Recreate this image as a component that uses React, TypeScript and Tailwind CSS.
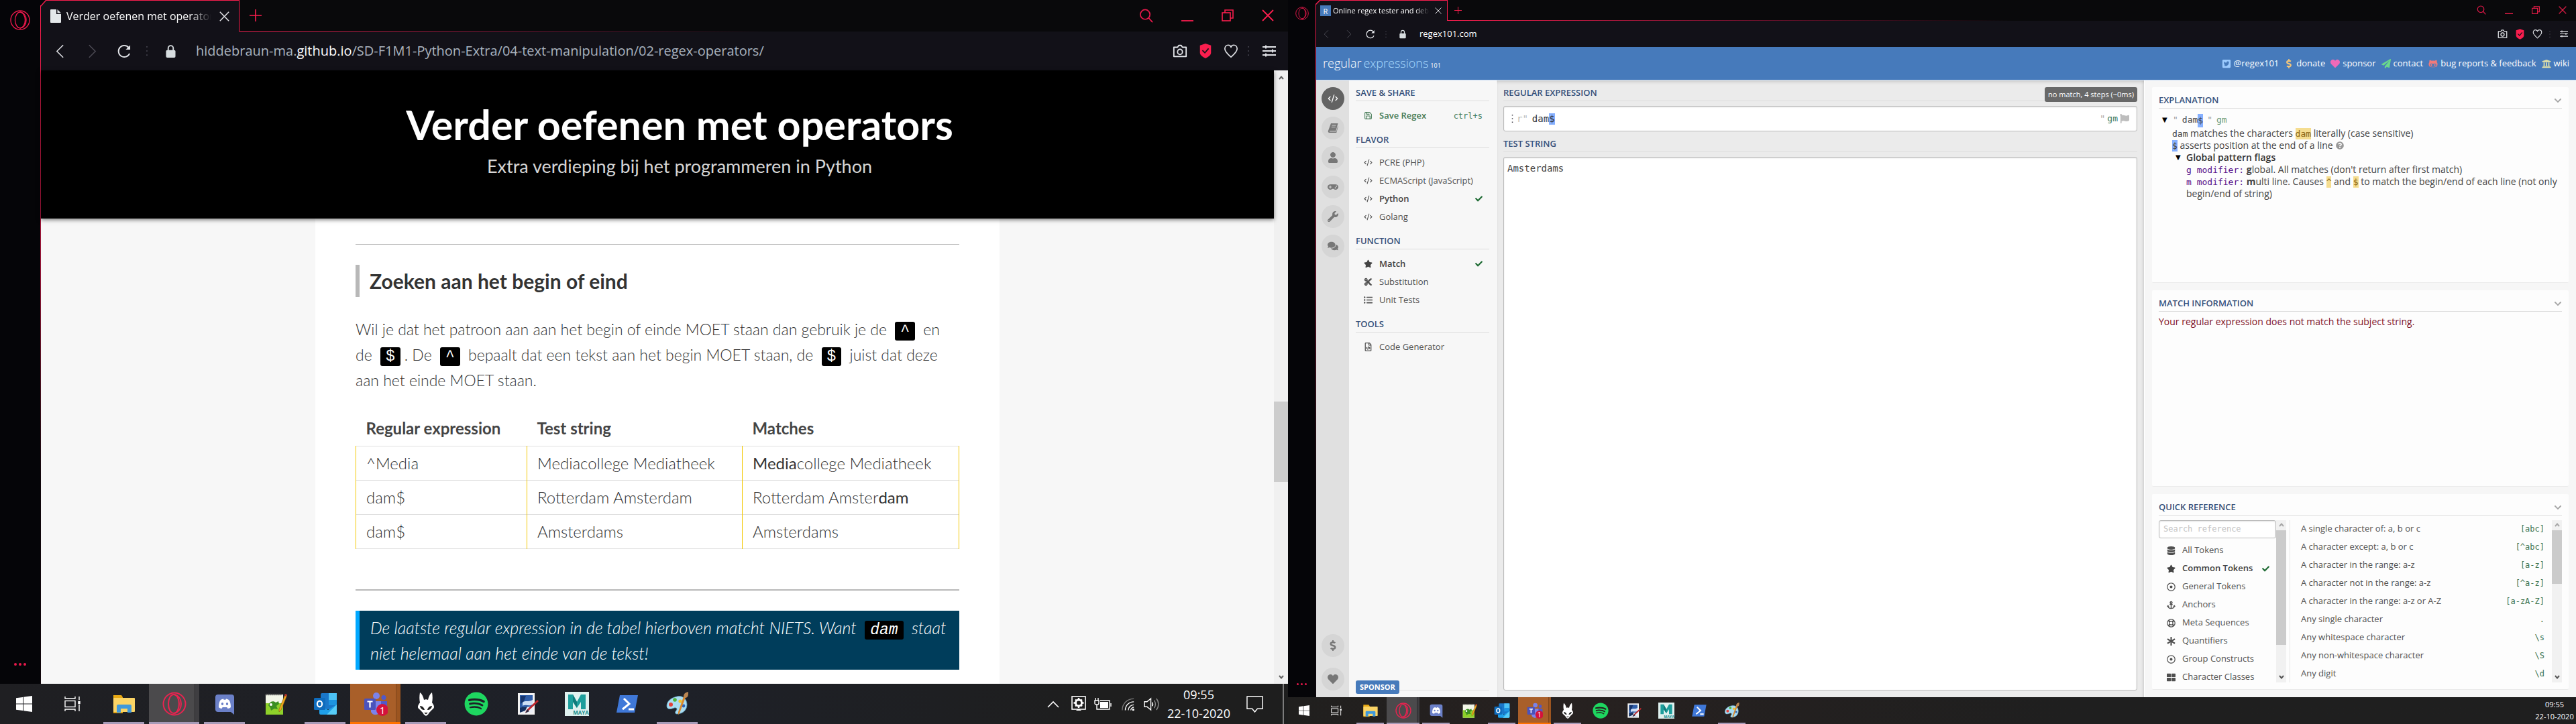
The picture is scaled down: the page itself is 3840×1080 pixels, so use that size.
import React from "react";
import { CodeXml, Save } from "lucide-react";
import {
  FaAnchor,
  FaAsterisk,
  FaCheck,
  FaChevronDown,
  FaComments,
  FaCut,
  FaDatabase,
  FaDollarSign,
  FaFlag,
  FaGamepad,
  FaGithubAlt,
  FaHeart,
  FaListUl,
  FaPaperPlane,
  FaQuestionCircle,
  FaRegDotCircle,
  FaRegFileCode,
  FaRegLifeRing,
  FaSpotify,
  FaStar,
  FaThLarge,
  FaTwitterSquare,
  FaUniversity,
  FaUser,
  FaWrench,
} from "react-icons/fa";

type IconProps = { className?: string };

/* ---------- Browser chrome icons ---------- */

const OperaRing = ({ className }: IconProps) => (
  <svg viewBox="0 0 30 30" className={className} fill="none" stroke="#e8194b" strokeWidth="1.4" aria-hidden="true">
    <circle cx="15" cy="15" r="14" />
    <ellipse cx="15" cy="15" rx="7.5" ry="12" />
    <path d="M15 3c6 1 9 6 9 12s-3 11-9 12" />
  </svg>
);

const BackIcon = ({ className }: IconProps) => (
  <svg viewBox="0 0 14 22" className={className} fill="none" stroke="currentColor" strokeWidth="1.6" aria-hidden="true">
    <path d="M12 1 2 11l10 10" />
  </svg>
);

const ForwardIcon = ({ className }: IconProps) => (
  <svg viewBox="0 0 14 22" className={className} fill="none" stroke="currentColor" strokeWidth="1.6" aria-hidden="true">
    <path d="M2 1l10 10L2 21" />
  </svg>
);

const ReloadIcon = ({ className }: IconProps) => (
  <svg viewBox="0 0 22 22" className={className} fill="none" stroke="currentColor" strokeWidth="2" aria-hidden="true">
    <path d="M19 14.5A9 9 0 1 1 17.5 5" />
    <path d="M20 1.5v7h-7z" fill="currentColor" stroke="none" />
  </svg>
);

const LockIcon = ({ className }: IconProps) => (
  <svg viewBox="0 0 16 22" className={className} aria-hidden="true">
    <path d="M4 10V6a4 4 0 0 1 8 0v4" fill="none" stroke="#d7dde0" strokeWidth="2" />
    <rect x="0.5" y="9" width="15" height="12" rx="2" fill="#d7dde0" />
  </svg>
);

const DotsIcon = ({ className }: IconProps) => (
  <svg viewBox="0 0 2 16" className={className} fill="#45444e" aria-hidden="true">
    <rect width="2" height="2" y="0" />
    <rect width="2" height="2" y="7" />
    <rect width="2" height="2" y="14" />
  </svg>
);

const CameraIcon = ({ className }: IconProps) => (
  <svg viewBox="0 0 24 24" className={className} fill="none" stroke="#e4e6ea" strokeWidth="2" aria-hidden="true">
    <path d="M2 6h6l2-3h4l2 3h6v15H2z" strokeLinejoin="round" />
    <ellipse cx="12" cy="13.5" rx="4" ry="4.2" />
  </svg>
);

const ShieldIcon = ({ className }: IconProps) => (
  <svg viewBox="0 0 20 24" className={className} aria-hidden="true">
    <path d="M10 0 19 3v12c0 4-5 7-9 9-4-2-9-5-9-9V3z" fill="#fa1e4e" />
    <path d="m5 11 4 4 6-7" fill="none" stroke="#15141a" strokeWidth="2" />
  </svg>
);

const HeartOutline = ({ className }: IconProps) => (
  <svg viewBox="0 0 24 24" className={className} fill="none" stroke="#e4e6ea" strokeWidth="1.8" aria-hidden="true">
    <path d="M12 22C7 17.500 2 13.500 2 8.500 2 5 4.500 2.500 7.500 2.500c2 0 3.600 1 4.500 3 .9-2 2.500-3 4.500-3 3 0 5.500 2.500 5.500 6 0 5-5 9-10 13.500z" />
  </svg>
);

const SlidersIcon = ({ className }: IconProps) => (
  <svg viewBox="0 0 20 18" className={className} stroke="#e4e6ea" strokeWidth="1.8" aria-hidden="true">
    <path d="M0 3h20M0 9h20M0 15h20M5 0.500v5M15 6.500v5M5 12.500v5" />
  </svg>
);

const SearchIcon = ({ className }: IconProps) => (
  <svg viewBox="0 0 22 22" className={className} fill="none" stroke="#e8194b" strokeWidth="1.8" aria-hidden="true">
    <circle cx="9.500" cy="9" r="7.500" />
    <path d="m15 14.500 6 6.500" />
  </svg>
);

const MinimizeIcon = ({ className }: IconProps) => (
  <svg viewBox="0 0 18 18" className={className} stroke="#fa1e4e" strokeWidth="1.8" aria-hidden="true">
    <path d="M0 17h18" />
  </svg>
);

const RestoreIcon = ({ className }: IconProps) => (
  <svg viewBox="0 0 18 18" className={className} fill="none" stroke="#fa1e4e" strokeWidth="1.6" aria-hidden="true">
    <rect x="1" y="5" width="12" height="12" />
    <path d="M5 5V1h12v12h-4" />
  </svg>
);

const CrossIcon = ({ className }: IconProps) => (
  <svg viewBox="0 0 18 18" className={className} fill="none" stroke="currentColor" strokeWidth="1.8" aria-hidden="true">
    <path d="m1 1 16 16M17 1 1 17" />
  </svg>
);

const PlusIcon = ({ className }: IconProps) => (
  <svg viewBox="0 0 18 18" className={className} fill="none" stroke="#fa1e4e" strokeWidth="1.6" aria-hidden="true">
    <path d="M9 0v18M0 9h18" />
  </svg>
);

const PageIcon = ({ className }: IconProps) => (
  <svg viewBox="0 0 16 20" className={className} aria-hidden="true">
    <path d="M1 0h8v7h7v12a1 1 0 0 1-1 1H1a1 1 0 0 1-1-1V1a1 1 0 0 1 1-1z" fill="#e4e8ea" />
    <path d="M10.500 0 16 5.500h-5.500z" fill="#e4e8ea" />
  </svg>
);

const ArrowGlyph = ({ up, className }: { up?: boolean; className?: string }) => (
  <svg viewBox="0 0 8 6" className={className} fill="none" stroke="currentColor" strokeWidth="2" aria-hidden="true">
    <path d={up ? "M1 5 4 1.500 7 5" : "M1 1 4 4.500 7 1"} />
  </svg>
);

/* ---------- Taskbar icons ---------- */

const WindowsLogo = ({ className }: IconProps) => (
  <svg viewBox="0 0 24 24" className={className} fill="#fff" aria-hidden="true">
    <path d="M0 3.300 10 2v9.500H0zM11 1.800 24 0v11.500H11zM0 12.500h10V22L0 20.700zM11 12.500h13V24l-13-1.800z" />
  </svg>
);

const TaskView = ({ className }: IconProps) => (
  <svg viewBox="0 0 24 24" className={className} fill="none" stroke="#fff" strokeWidth="1.4" aria-hidden="true">
    <rect x="1" y="7.500" width="15" height="9" />
    <path d="M1 1v3h15V1M1 23v-3h15v3M22 1v5M22 13v10" />
    <rect x="21" y="8.500" width="2" height="3" fill="#fff" />
  </svg>
);

const Folder = ({ className }: IconProps) => (
  <svg viewBox="0 0 36 36" className={className} aria-hidden="true">
    <path d="M2 5h12l2 3v24H2z" fill="#e8a813" />
    <rect x="2" y="9" width="32" height="21" rx="1" fill="#fbd465" />
    <path d="M7 31V21a2 2 0 0 1 2-2h18a2 2 0 0 1 2 2v10h-6v-6H13v6z" fill="#3f99dc" />
  </svg>
);

const OperaGx = ({ className }: IconProps) => (
  <svg viewBox="0 0 36 36" className={className} fill="none" stroke="#ea2350" strokeWidth="2" aria-hidden="true">
    <circle cx="18" cy="18" r="16.500" />
    <ellipse cx="17" cy="18" rx="8" ry="14" />
    <path d="M18 4c7 2 10 8 10 14s-3 12-10 14" />
  </svg>
);

const Discord = ({ className }: IconProps) => (
  <svg viewBox="0 0 36 36" className={className} aria-hidden="true">
    <path d="M8 4h20a4 4 0 0 1 4 4v26l-5-4H8a4 4 0 0 1-4-4V8a4 4 0 0 1 4-4z" fill="#6b80c8" />
    <path d="M9 23c0-5 1-9 3-11 2-1 3-1.500 4-1.500l.6 1.300h2.800l.6-1.300c1 0 2 .5 4 1.500 2 2 3 6 3 11-1 1-3 2-4.500 2l-1.200-2h-6.600l-1.200 2c-1.500 0-3.500-1-4.500-2z" fill="#fff" />
    <ellipse cx="14.500" cy="18" rx="1.700" ry="2" fill="#6b80c8" />
    <ellipse cx="21.500" cy="18" rx="1.700" ry="2" fill="#6b80c8" />
  </svg>
);

const NotepadPlus = ({ className }: IconProps) => (
  <svg viewBox="0 0 36 36" className={className} aria-hidden="true">
    <rect x="4" y="4" width="26" height="30" fill="#f3f6e8" />
    <path d="M4 17h26v17H4z" fill="#8fd12a" />
    <path d="M5 4h24" stroke="#555" strokeWidth="2.500" strokeDasharray="1.500 1.500" />
    <path d="M8 20c2-6 8-7 11-4l4-2 1 4-4 3 2 5-5-1-5 3-1-4z" fill="#3b8f22" />
    <circle cx="12" cy="19" r="2" fill="#fff" />
    <path d="m33 4 3 1-9 22-3 3v-4z" fill="#f0a51c" stroke="#7b5a14" strokeWidth="0.600" />
    <path d="m33 3 3 1-1 3-3-1z" fill="#b3302a" />
  </svg>
);

const Outlook = ({ className }: IconProps) => (
  <svg viewBox="0 0 36 36" className={className} aria-hidden="true">
    <rect x="11" y="2" width="24" height="24" rx="2" fill="#1a77c9" />
    <rect x="23" y="2" width="12" height="12" fill="#4cc2f5" />
    <rect x="23" y="12" width="12" height="8" fill="#1d94e0" />
    <path d="M9 19l13 8 13-8v13a2 2 0 0 1-2 2H11a2 2 0 0 1-2-2z" fill="#1fa0ea" />
    <path d="M35 19v13a2 2 0 0 1-2 2H20z" fill="#57cdf8" />
    <rect x="1" y="9" width="17" height="18" rx="1.500" fill="#0f6cbd" />
    <ellipse cx="9.500" cy="18" rx="3.600" ry="4.400" fill="none" stroke="#fff" strokeWidth="2.200" />
  </svg>
);

const Teams = ({ className }: IconProps) => (
  <svg viewBox="0 0 36 36" className={className} aria-hidden="true">
    <circle cx="19" cy="6" r="5" fill="#7b83eb" />
    <circle cx="30" cy="8.500" r="3.500" fill="#5059c9" />
    <path d="M24 14h11v10a6 6 0 0 1-6 6h-5z" fill="#5059c9" />
    <path d="M11 14h15v12a8 8 0 0 1-15 4z" fill="#7b83eb" />
    <rect x="1" y="10" width="17" height="17" rx="1.500" fill="#4b53bc" />
    <path d="M5.500 14.500h8M9.500 14.500v9" stroke="#fff" strokeWidth="2.200" />
    <circle cx="28" cy="27" r="9" fill="#d4123c" />
    <text x="28" y="32.500" fontSize="15" fontFamily="Open Sans, sans-serif" fill="#fff" textAnchor="middle">
      1
    </text>
  </svg>
);

const Foobar = ({ className }: IconProps) => (
  <svg viewBox="0 0 36 36" className={className} aria-hidden="true">
    <path d="M9 1c3 2 5 6 6 11 2-1 4-1 6 0 1-5 3-9 6-11 1 6 1 10 0 15 3 4 4 7 2 9-3 3-6 5-8 9l-3 2-3-2c-2-4-5-6-8-9-2-2-1-5 2-9-1-5-1-9 0-15z" fill="#fff" />
    <path d="M9 21c3 0 6 2 7 6-4 0-6-2-7-6zM27 21c-3 0-6 2-7 6 4 0 6-2 7-6z" fill="#1d1d1d" />
    <path d="M15 31h6l-3 2.500z" fill="#1d1d1d" />
  </svg>
);

const Spotify = ({ className }: IconProps) => <FaSpotify className={className} color="#1ed760" />;

const PaintNet = ({ className }: IconProps) => (
  <svg viewBox="0 0 36 36" className={className} aria-hidden="true">
    <rect x="5" y="2" width="25" height="32" fill="#f2f2f2" />
    <rect x="8" y="5" width="19" height="26" fill="#2f5da8" />
    <path d="M9 6h8l-3 8-5 4z" fill="#16356e" />
    <path d="M12 16c4-4 8 0 15-4v7c-6 3-9-1-15 2z" fill="#cfdff5" />
    <path d="M8 25c6-4 12-1 19-4v10H8z" fill="#e9eef6" />
    <path d="M8 24c4-2 8-1 11-2l-3 6-8 3z" fill="#14305f" />
    <path d="m34 12 2 2-16 15-4 2 2-4z" fill="#c1272d" />
    <path d="m19 26 3 3-6 3z" fill="#2a2a40" />
  </svg>
);

const Maya = ({ className }: IconProps) => (
  <svg viewBox="0 0 36 36" className={className} aria-hidden="true">
    <rect width="36" height="36" fill="#dff1ef" />
    <path d="M5 4h7l6 11 6-11h7v22h-7V15l-6 9-6-9v11H5z" fill="#1c9e9c" />
    <path d="M12 4l6 11v9l-6-9z" fill="#0f7c7c" />
    <text x="24" y="34" fontSize="8" fontWeight="700" fontFamily="Open Sans, sans-serif" fill="#0f8a8a" textAnchor="middle">
      MAYA
    </text>
  </svg>
);

const PowerShell = ({ className }: IconProps) => (
  <svg viewBox="0 0 36 36" className={className} aria-hidden="true">
    <path d="M7 5h27l-5 26H2z" fill="#3f78d8" />
    <path d="m13 10 8 8-10 8M20 26h8" fill="none" stroke="#fff" strokeWidth="3" />
  </svg>
);

const Paint = ({ className }: IconProps) => (
  <svg viewBox="0 0 36 36" className={className} aria-hidden="true">
    <path d="M17 7c9-2 15 4 15 12 0 9-7 14-15 14-3 0-3-3-1-5s1-5-3-4c-5 2-11 3-11-3C2 14 8 9 17 7z" fill="#a9dcf2" stroke="#5b9cbb" strokeWidth="0.800" />
    <circle cx="8" cy="19" r="3" fill="#e2403a" />
    <circle cx="14" cy="12" r="2.800" fill="#4fb53c" />
    <circle cx="22" cy="14" r="2.600" fill="#f2c230" />
    <circle cx="27" cy="21" r="2.400" fill="#2d63b8" />
    <path d="m30 8-9 24-2 2v-4l8-23z" fill="#d9862a" />
    <path d="M27 8c0-5 2-7 7-8 0 5 0 8-4 9z" fill="#b98552" />
  </svg>
);

type TaskApp = { name: string; Icon: (p: IconProps) => React.ReactElement; state?: "open" | "active" | "alert" };

const apps: TaskApp[] = [
  { name: "File Explorer", Icon: Folder, state: "open" },
  { name: "Opera GX", Icon: OperaGx, state: "active" },
  { name: "Discord", Icon: Discord, state: "open" },
  { name: "Notepad++", Icon: NotepadPlus },
  { name: "Outlook", Icon: Outlook, state: "open" },
  { name: "Teams", Icon: Teams, state: "alert" },
  { name: "foobar2000", Icon: Foobar, state: "open" },
  { name: "Spotify", Icon: Spotify },
  { name: "paint.net", Icon: PaintNet },
  { name: "Maya", Icon: Maya },
  { name: "PowerShell", Icon: PowerShell },
  { name: "Paint", Icon: Paint, state: "open" },
];

function TaskApps({ large }: { large?: boolean }) {
  return (
    <>
      <button aria-label="Start" className={`flex h-full items-center justify-center ${large ? "w-[72px]" : "w-12"}`}>
        <WindowsLogo className={large ? "size-6" : "size-4"} />
      </button>
      <button aria-label="Task view" className={`flex h-full items-center justify-center ${large ? "w-[71px]" : "w-12"}`}>
        <TaskView className={large ? "size-6" : "size-4"} />
      </button>
      <div className={large ? "w-1" : "w-[2px]"} />
      {apps.map(({ name, Icon, state }) => (
        <div key={name} className={`h-full ${large ? "w-[75px]" : "w-[49px]"}`}>
          <button
            aria-label={name}
            className={`relative flex h-full w-full items-center justify-center ${
              state === "active" ? "bg-[#4b4a4c]" : state === "alert" ? "bg-[#a95f29]" : ""
            }`}
          >
            <Icon className={large ? "size-9" : "size-6"} />
            {state === "open" && (
              <span className={`absolute bottom-0 bg-[#a79bb8] ${large ? "inset-x-[7px] h-[3px]" : "inset-x-1 h-[2px]"}`} />
            )}
            {state === "active" && (
              <>
                <span className={`absolute inset-y-0 right-0 border-l border-[#2c2b2d] bg-[#3f3e41] ${large ? "w-[7px]" : "w-1"}`} />
                <span className={`absolute inset-x-0 bottom-0 bg-[#a79bb8] ${large ? "h-[3px]" : "h-[2px]"}`} />
              </>
            )}
            {state === "alert" && (
              <>
                <span className={`absolute inset-y-0 right-0 border-l border-[#7f451b] bg-[#9c5520] ${large ? "w-[7px]" : "w-1"}`} />
                <span className={`absolute inset-x-0 bottom-0 bg-[#ff7200] ${large ? "h-[3px]" : "h-[2px]"}`} />
              </>
            )}
          </button>
        </div>
      ))}
    </>
  );
}

/* ---------- Browser frame ---------- */

type BrowserProps = {
  large?: boolean;
  tabTitle: string;
  favicon: React.ReactNode;
  url: React.ReactNode;
  urlText: string;
  canGoBack?: boolean;
  children: React.ReactNode;
};

function Browser({ large, tabTitle, favicon, url, urlText, canGoBack, children }: BrowserProps) {
  return (
    <div className="flex min-h-0 flex-1 bg-[#050508] font-['Open_Sans',sans-serif]">
      <div className={`flex shrink-0 flex-col items-center justify-between ${large ? "w-[60px] py-[15px]" : "w-[41px] py-[10px]"}`}>
        <OperaRing className={large ? "size-[30px]" : "size-5"} />
        <button aria-label="More" className={`flex ${large ? "gap-[3px] pb-3" : "gap-[3px] pb-2"}`}>
          {[0, 1, 2].map((i) => (
            <span key={i} className={`rounded-full bg-[#e8194b] ${large ? "size-1" : "size-[3px]"}`} />
          ))}
        </button>
      </div>
      <div className="mt-2 w-px shrink-0 bg-linear-to-b from-[#fa1e4e] via-[#a0153a] via-40% to-[#12060c] to-70%" />
      <div className="flex min-w-0 flex-1 flex-col">
        <div className={`flex shrink-0 ${large ? "h-[47px]" : "h-[31px]"}`}>
          <div
            className={`relative -ml-px shrink-0 bg-[#fa1e4e] px-px pt-px ${
              large
                ? "w-[297px] [clip-path:polygon(8px_0,100%_0,100%_100%,0_100%,0_9px)]"
                : "w-[197px] [clip-path:polygon(6px_0,100%_0,100%_100%,0_100%,0_6px)]"
            }`}
          >
            <div
              className={`flex h-full items-center bg-[#121118] ${
                large
                  ? "pr-[14px] pl-[14px] [clip-path:polygon(8px_0,100%_0,100%_100%,0_100%,0_9px)]"
                  : "pr-[8px] pl-[6px] [clip-path:polygon(6px_0,100%_0,100%_100%,0_100%,0_6px)]"
              }`}
            >
              {favicon}
              <span
                className={`min-w-0 flex-1 overflow-hidden whitespace-nowrap text-white [mask-image:linear-gradient(to_right,black_85%,transparent)] ${
                  large ? "ml-2 text-[16px]" : "ml-[3px] text-[11px]"
                }`}
              >
                {tabTitle}
              </span>
              <button aria-label="Close tab" className={`text-[#e8e8ec] ${large ? "ml-3" : "ml-2"}`}>
                <CrossIcon className={large ? "size-[15px]" : "size-[10px]"} />
              </button>
            </div>
          </div>
          <div className="flex min-w-0 flex-1 flex-col bg-[#09090b]">
            <div className={`flex flex-1 items-center ${large ? "pr-[21px] pl-[15px]" : "pr-[14px] pl-[10px]"}`}>
              <button aria-label="New tab">
                <PlusIcon className={large ? "size-[18px]" : "size-[11px]"} />
              </button>
              <div className="flex-1" />
              <div className={`flex items-center ${large ? "gap-[42px]" : "gap-[28px]"}`}>
                <button aria-label="Search tabs">
                  <SearchIcon className={large ? "size-[21px]" : "size-[14px]"} />
                </button>
                <button aria-label="Minimize">
                  <MinimizeIcon className={large ? "size-[18px]" : "size-3"} />
                </button>
                <button aria-label="Restore">
                  <RestoreIcon className={large ? "size-[18px]" : "size-3"} />
                </button>
                <button aria-label="Close" className="text-[#fa1e4e]">
                  <CrossIcon className={large ? "size-[18px]" : "size-3"} />
                </button>
              </div>
            </div>
            <div className="h-px bg-linear-to-r from-[#fa1e4e] via-[#7a1230] via-25% to-transparent to-50%" />
          </div>
        </div>
        <div className={`flex shrink-0 items-center bg-[#121118] ${large ? "h-[58px] pr-[18px] pl-[22px]" : "h-[39px] pr-[12px] pl-[11px]"}`}>
          <button aria-label="Back" className={canGoBack ? "text-[#e4e6ea]" : "text-[#4c4b54]"}>
            <BackIcon className={large ? "h-[21px] w-[13px]" : "h-[14px] w-[8px]"} />
          </button>
          <button aria-label="Forward" className={`text-[#4c4b54] ${large ? "ml-[35px]" : "ml-[26px]"}`}>
            <ForwardIcon className={large ? "h-[21px] w-[13px]" : "h-[14px] w-[8px]"} />
          </button>
          <button aria-label="Reload" className={`text-[#e4e6ea] ${large ? "ml-[31px]" : "ml-[21px]"}`}>
            <ReloadIcon className={large ? "size-[21px]" : "size-[14px]"} />
          </button>
          <DotsIcon className={large ? "ml-[22px] h-[14px] w-[2px]" : "ml-[15px] h-[10px] w-[2px]"} />
          <LockIcon className={large ? "ml-[27px] h-[21px] w-[15px]" : "ml-[19px] h-[14px] w-[10px]"} />
          <a
            href={urlText}
            className={`min-w-0 flex-1 truncate text-[#a9b3bf] ${large ? "ml-[30px] text-[20px]" : "ml-[20px] text-[13px]"}`}
          >
            {url}
          </a>
          <div className={`flex items-center ${large ? "gap-[17px]" : "gap-[12px]"}`}>
            <button aria-label="Snapshot">
              <CameraIcon className={large ? "size-[22px]" : "size-[15px]"} />
            </button>
            <button aria-label="Ad blocker">
              <ShieldIcon className={large ? "h-[22px] w-[20px]" : "h-[16px] w-[13px]"} />
            </button>
            <button aria-label="Add to bookmarks">
              <HeartOutline className={large ? "size-[22px]" : "size-[15px]"} />
            </button>
          </div>
          <DotsIcon className={large ? "ml-[14px] h-[14px] w-[2px]" : "ml-[10px] h-[10px] w-[2px]"} />
          <button aria-label="Easy setup" className={large ? "ml-[20px]" : "ml-[14px]"}>
            <SlidersIcon className={large ? "h-[18px] w-[20px]" : "h-[13px] w-[12px]"} />
          </button>
        </div>
        {children}
      </div>
    </div>
  );
}

/* ---------- Course page ---------- */

const Code = ({ children }: { children: React.ReactNode }) => (
  <code className="mx-[6px] inline-block h-7 rounded-[3px] bg-black px-2 align-baseline font-['Liberation_Mono',monospace] text-[23px] leading-7 font-normal text-white">
    {children}
  </code>
);

const rows: { re: string; test: string; match: React.ReactNode }[] = [
  { re: "^Media", test: "Mediacollege Mediatheek", match: <><b>Media</b>college Mediatheek</> },
  { re: "dam$", test: "Rotterdam Amsterdam", match: <>Rotterdam Amster<b>dam</b></> },
  { re: "dam$", test: "Amsterdams", match: "Amsterdams" },
];

function CoursePage() {
  return (
    <div className="flex min-h-0 flex-1 bg-[#f7f7f7] font-[Lato,sans-serif]">
      <div className="flex min-w-0 flex-1 flex-col">
        <header className="relative flex h-[221px] shrink-0 flex-col items-center bg-black pt-[45px] pl-[66px] shadow-[0_2px_6px_rgba(0,0,0,0.5)]">
          <h1 className="text-[61px] leading-[72px] font-bold text-white">Verder oefenen met operators</h1>
          <p className="mt-[8px] text-[27px] leading-[36px] text-[#d6d6d6]">Extra verdieping bij het programmeren in Python</p>
        </header>
        <main className="mx-auto min-h-0 w-[1020px] flex-1 overflow-hidden bg-white px-[60px] pt-[38px] text-[25px] leading-[38px] font-light text-[#333]">
          <hr className="border-t border-[#b8b8b8]" />
          <h2 className="mt-[30px] border-l-[6px] border-[#b8b8b8] pl-[15px] text-[30px] leading-[48px] font-bold text-[#333]">
            Zoeken aan het begin of eind
          </h2>
          <p className="mt-[29px] pr-3 text-[23px]">
            Wil je dat het patroon aan aan het begin of einde MOET staan dan gebruik je de <Code>^</Code> en de <Code>$</Code>. De{" "}
            <Code>^</Code> bepaalt dat een tekst aan het begin MOET staan, de <Code>$</Code> juist dat deze aan het einde MOET staan.
          </p>
          <table className="mt-7 w-full table-fixed border-collapse text-left text-[24px] leading-[38px]">
            <thead>
              <tr className="h-[51px]">
                <th className="w-[255px] px-[15px] font-bold text-[#444]">Regular expression</th>
                <th className="w-[321px] px-[15px] font-bold text-[#444]">Test string</th>
                <th className="px-[15px] font-bold text-[#444]">Matches</th>
              </tr>
            </thead>
            <tbody>
              {rows.map((r, i) => (
                <tr key={i} className="h-[51px] border-y border-[#e0e0e0]">
                  <td className="border-x border-x-[#f3c800] px-[15px]">{r.re}</td>
                  <td className="border-x border-x-[#f3c800] px-[15px]">{r.test}</td>
                  <td className="border-x border-x-[#f3c800] px-[15px]">{r.match}</td>
                </tr>
              ))}
            </tbody>
          </table>
          <hr className="mt-[60px] border-t-2 border-[#b8b8b8]" />
          <p className="mt-[30px] border-l-[6px] border-[#00a8ff] bg-[#003d5b] py-[6px] pr-3 pl-4 text-white italic">
            De laatste regular expression in de tabel hierboven matcht NIETS. Want <Code>dam</Code> staat niet helemaal aan het einde van
            de tekst!
          </p>
        </main>
      </div>
      <div className="flex w-[21px] shrink-0 flex-col items-center bg-[#f0f0f0] text-[#606060]">
        <button aria-label="Scroll up" className="flex h-[21px] items-center">
          <ArrowGlyph up className="h-[6px] w-[8px]" />
        </button>
        <div className="flex w-full flex-1 flex-col">
          <div className="flex-[474]" />
          <div className="flex-[120] bg-[#cdcdcd]" />
          <div className="flex-[280]" />
        </div>
        <button aria-label="Scroll down" className="flex h-[21px] items-center">
          <ArrowGlyph className="h-[6px] w-[8px]" />
        </button>
      </div>
    </div>
  );
}

/* ---------- regex101 ---------- */

const SlantedBook = ({ className }: IconProps) => (
  <svg viewBox="0 0 16 16" className={className} aria-hidden="true">
    <path d="M5 1h10.500L12.500 12H3.500c-1 0-1 1.300 0 1.300H13L15.300 5l.4 1-2.500 9H3c-2 0-2.500-1.500-2.200-2.600z" fill="currentColor" />
    <path d="M6.500 4h6M5.800 6.500h6" stroke="#d5d5d5" strokeWidth="1" />
  </svg>
);

const FloppyIcon = ({ className }: IconProps) => <Save className={className} strokeWidth={2} />;
const CodeIcon = ({ className }: IconProps) => <CodeXml className={className} strokeWidth={2} />;

type MenuItem = {
  label: string;
  Icon: React.ComponentType<{ className?: string }>;
  active?: boolean;
  shortcut?: string;
};

const menu: { title: string; items: MenuItem[] }[] = [
  { title: "SAVE & SHARE", items: [{ label: "Save Regex", Icon: FloppyIcon, shortcut: "ctrl+s" }] },
  {
    title: "FLAVOR",
    items: [
      { label: "PCRE (PHP)", Icon: CodeIcon },
      { label: "ECMAScript (JavaScript)", Icon: CodeIcon },
      { label: "Python", Icon: CodeIcon, active: true },
      { label: "Golang", Icon: CodeIcon },
    ],
  },
  {
    title: "FUNCTION",
    items: [
      { label: "Match", Icon: FaStar, active: true },
      { label: "Substitution", Icon: FaCut },
      { label: "Unit Tests", Icon: FaListUl },
    ],
  },
  { title: "TOOLS", items: [{ label: "Code Generator", Icon: FaRegFileCode }] },
];

const tokens: MenuItem[] = [
  { label: "All Tokens", Icon: FaDatabase },
  { label: "Common Tokens", Icon: FaStar, active: true },
  { label: "General Tokens", Icon: FaRegDotCircle },
  { label: "Anchors", Icon: FaAnchor },
  { label: "Meta Sequences", Icon: FaRegLifeRing },
  { label: "Quantifiers", Icon: FaAsterisk },
  { label: "Group Constructs", Icon: FaRegDotCircle },
  { label: "Character Classes", Icon: FaThLarge },
];

const reference: [string, string][] = [
  ["A single character of: a, b or c", "[abc]"],
  ["A character except: a, b or c", "[^abc]"],
  ["A character in the range: a-z", "[a-z]"],
  ["A character not in the range: a-z", "[^a-z]"],
  ["A character in the range: a-z or A-Z", "[a-zA-Z]"],
  ["Any single character", "."],
  ["Any whitespace character", "\\s"],
  ["Any non-whitespace character", "\\S"],
  ["Any digit", "\\d"],
];

const rail = [
  { label: "Regex Editor", Icon: CodeXml, active: true },
  { label: "Community Patterns", Icon: SlantedBook },
  { label: "Account", Icon: FaUser },
  { label: "Regex Quiz", Icon: FaGamepad },
  { label: "Settings", Icon: FaWrench },
  { label: "Live Help", Icon: FaComments },
];

const railBottom = [
  { label: "Donate", Icon: FaDollarSign },
  { label: "Sponsor", Icon: FaHeart },
];

const links = [
  { label: "@regex101", Icon: FaTwitterSquare, color: "text-[#9ccbff]" },
  { label: "donate", Icon: FaDollarSign, color: "text-[#f3c67a]" },
  { label: "sponsor", Icon: FaHeart, color: "text-[#f06ab8]" },
  { label: "contact", Icon: FaPaperPlane, color: "text-[#6ad98a]" },
  { label: "bug reports & feedback", Icon: FaGithubAlt, color: "text-[#f27a7a]" },
  { label: "wiki", Icon: FaUniversity, color: "text-[#dfe0a8]" },
];

const Heading = ({ children, className = "" }: { children: React.ReactNode; className?: string }) => (
  <h3 className={`h-6 border-b border-[#dcdcdc] text-[13px] leading-[23px] font-semibold whitespace-nowrap text-[#35507a] ${className}`}>
    {children}
  </h3>
);

function Menu({ item }: { item: MenuItem }) {
  const { label, Icon, active, shortcut } = item;
  return (
    <button
      className={`flex h-[27px] w-full items-center px-[10px] text-left whitespace-nowrap ${
        shortcut ? "font-semibold text-[#447a55]" : active ? "font-semibold text-[#444]" : "text-[#505050]"
      }`}
    >
      <span className="flex w-4 justify-center">
        <Icon className="size-[13px]" />
      </span>
      <span className="ml-[9px] flex-1 text-[13px]">{label}</span>
      {shortcut && <span className="font-['DejaVu_Sans_Mono',monospace] text-[12px] font-normal">{shortcut}</span>}
      {active && <FaCheck className="size-[11px] text-[#1f6b34]" />}
    </button>
  );
}

function Card({ title, children }: { title: string; children: React.ReactNode }) {
  return (
    <section className="flex min-h-0 flex-1 basis-0 flex-col rounded-[2px] border-b border-[#ebebeb] bg-[#fdfdfd] px-[10px] pt-2 pb-[10px]">
      <div className="relative">
        <Heading>{title}</Heading>
        <button aria-label={`Collapse ${title}`} className="absolute top-[6px] right-0 text-[#a5a5a5]">
          <FaChevronDown className="size-3" />
        </button>
      </div>
      {children}
    </section>
  );
}

function MiniScroll({ thumb, rest }: { thumb: string; rest: string }) {
  return (
    <div className="flex w-[15px] shrink-0 flex-col items-center bg-[#f1f1f1]">
      <button aria-label="Scroll up" className="flex h-[15px] items-center text-[#a8a8a8]">
        <ArrowGlyph up className="h-[6px] w-2" />
      </button>
      <div className={`w-full bg-[#cbcbcb] ${thumb}`} />
      <div className={rest} />
      <button aria-label="Scroll down" className="flex h-[15px] items-center text-[#555]">
        <ArrowGlyph className="h-[6px] w-2" />
      </button>
    </div>
  );
}

const mono = "font-['DejaVu_Sans_Mono',monospace]";
const monoInline = "font-['DejaVu_Sans_Mono',monospace] text-[13px] leading-none";
const fieldBox = "rounded-[3px] border border-[#b9b9b9] bg-white shadow-[inset_0_1px_2px_rgba(0,0,0,0.12)]";
const Sel = ({ children }: { children: React.ReactNode }) => <span className="bg-[#86b0ff] py-px">{children}</span>;
const Hl = ({ children }: { children: React.ReactNode }) => (
  <span className={`bg-[#f5dd90] py-px text-[#8a6410] ${monoInline}`}>{children}</span>
);

function RegexPage() {
  return (
    <div className="flex min-h-0 flex-1 flex-col text-[13px] text-[#444]">
      <header className="flex h-[50px] shrink-0 items-center border-b border-[#cfe0f5] bg-[#467abb] pr-[10px] pl-[10px]">
        <a href="#home" className="flex items-baseline text-[18px] font-light text-white">
          regular<span className="ml-[3px] text-[#a9dbff]">expressions</span>
          <span className="ml-[3px] text-[9px] font-normal">101</span>
        </a>
        <nav className="ml-auto flex items-center gap-2 text-[13px] text-white">
          {links.map(({ label, Icon, color }) => (
            <a key={label} href={`#${label}`} className="flex items-center gap-1 whitespace-nowrap">
              <Icon className={`size-[14px] ${color}`} />
              {label}
            </a>
          ))}
        </nav>
      </header>
      <div className="flex min-h-0 flex-1">
        <aside className="flex w-[49px] shrink-0 flex-col items-center gap-[10px] bg-[#e0e0e0] pt-[10px] pb-[10px]">
          {rail.map(({ label, Icon, active }) => (
            <button
              key={label}
              aria-label={label}
              className={`flex size-[34px] items-center justify-center rounded-full ${active ? "bg-[#636363] text-white" : "bg-[#d5d5d5] text-[#777]"}`}
            >
              <Icon className="size-4" />
            </button>
          ))}
          <div className="mt-auto flex flex-col gap-4">
            {railBottom.map(({ label, Icon }) => (
              <button key={label} aria-label={label} className="flex size-[34px] items-center justify-center rounded-full bg-[#d5d5d5] text-[#777]">
                <Icon className="size-4" />
              </button>
            ))}
          </div>
        </aside>
        <aside className="flex w-[220px] shrink-0 flex-col border-r border-white bg-[#f7f7f7] pt-[7px] pr-[10px] pl-[10px]">
          {menu.map((s) => (
            <section key={s.title} className="mb-[11px]">
              <Heading className="mb-2">{s.title}</Heading>
              {s.items.map((it) => (
                <Menu key={it.label} item={it} />
              ))}
            </section>
          ))}
          <div className="mt-auto flex items-center pb-[5px]">
            <span className="rounded-[3px] bg-[#467abb] px-[6px] text-[11px] leading-5 font-bold text-white">SPONSOR</span>
            <span className="mt-2 h-px flex-1 bg-[#dfdfdf]" />
          </div>
        </aside>
        <main className="flex min-w-0 flex-1 flex-col bg-[#ebebeb] px-[10px] pt-[7px] pb-[10px] shadow-[inset_0_4px_5px_-2px_rgba(0,0,0,0.15),inset_-4px_0_5px_-3px_rgba(0,0,0,0.12)]">
          <div className="relative">
            <Heading className="border-[#d6d6d6]">REGULAR EXPRESSION</Heading>
            <span className="absolute top-[3px] right-0 rounded-[3px] bg-[#686868] px-[5px] text-[11px] leading-[22px] text-white">
              no match, 4 steps (~0ms)
            </span>
          </div>
          <div className={`mt-[7px] flex h-[38px] items-center px-[11px] text-[14px] ${fieldBox} ${mono}`}>
            <DotsIcon className="h-3 w-[3px]" />
            <span className="ml-[5px] text-[#b9bdb9]">r"</span>
            <div className="relative ml-[6px] flex min-w-0 flex-1 items-center">
              <span aria-hidden="true" className="absolute left-[25px] h-[17px] w-[9px] bg-[#86b0ff]" />
              <input aria-label="Regular expression" defaultValue="dam$" className="relative w-full bg-transparent text-[#333] outline-none" />
            </div>
            <span className="text-[#aaa]">"</span>
            <button aria-label="Regex options" className="ml-[3px] flex items-center gap-[3px] text-[13px] text-[#447a55]">
              gm
              <FaFlag className="size-[14px] text-[#bdbdbd]" />
            </button>
          </div>
          <Heading className="mt-[7px] border-[#d6d6d6]">TEST STRING</Heading>
          <textarea
            aria-label="Test string"
            defaultValue="Amsterdams"
            className={`mt-[7px] min-h-0 w-full flex-1 resize-none px-[5px] py-[7px] text-[14px] leading-[18px] text-[#444] outline-none ${fieldBox} ${mono}`}
          />
        </main>
        <aside className="flex w-[644px] shrink-0 flex-col gap-[11px] border-l border-white bg-[#f6f6f6] px-[11px] pt-[10px] pb-[11px]">
          <Card title="EXPLANATION">
            <div className="pt-[8px] text-[14px] leading-[18px] text-[#444]">
              <div className={`flex text-[13px] leading-[18px] ${mono}`}>
                <span className="w-[21px] pl-[5px] font-['DejaVu_Sans',sans-serif] text-[10px] text-black">▼</span>
                <span className="mr-[6px] text-[#999]">"</span>dam<Sel>$</Sel>
                <span className="mr-[6px] ml-[6px] text-[#999]">"</span>
                <span className="text-[#6a9a7a]">gm</span>
              </div>
              <div className="pl-5">
                <p>
                  <span className={monoInline}>dam</span> matches the characters <Hl>dam</Hl> literally (case sensitive)
                </p>
                <p>
                  <span className={`bg-[#86b0ff] py-px ${monoInline}`}>$</span> asserts position at the end of a line{" "}
                  <FaQuestionCircle className="ml-px inline size-3 align-[-1px] text-[#999]" />
                </p>
                <p className="flex font-semibold text-[#333]">
                  <span className="w-[21px] pl-[5px] font-['DejaVu_Sans',sans-serif] text-[10px] font-normal text-black">▼</span>
                  Global pattern flags
                </p>
                <div className="pl-[21px]">
                  <p>
                    <span className={`text-[#55108a] ${monoInline}`}>g modifier:</span> <b>g</b>lobal. All matches (don't return after first match)
                  </p>
                  <p>
                    <span className={`text-[#55108a] ${monoInline}`}>m modifier:</span> <b>m</b>ulti line. Causes <Hl>^</Hl> and <Hl>$</Hl> to
                    match the begin/end of each line (not only begin/end of string)
                  </p>
                </div>
              </div>
            </div>
          </Card>
          <Card title="MATCH INFORMATION">
            <p className="pt-[6px] text-[14px] leading-[18px] text-[#7d1128]">Your regular expression does not match the subject string.</p>
          </Card>
          <Card title="QUICK REFERENCE">
            <div className="flex min-h-0 flex-1 pt-[7px]">
              <div className="flex w-[175px] shrink-0 flex-col overflow-hidden">
                <input
                  aria-label="Search reference"
                  placeholder="Search reference"
                  className={`h-[27px] w-full shrink-0 px-[6px] text-[12px] outline-none placeholder:text-[#c4c4c4] ${fieldBox} ${mono}`}
                />
                <div className="pt-[5px]">
                  {tokens.map((t) => (
                    <Menu key={t.label} item={t} />
                  ))}
                </div>
              </div>
              <MiniScroll thumb="flex-[171]" rest="flex-[41]" />
              <div className="ml-[5px] flex min-w-0 flex-1 border-l border-[#e4e4e4]">
                <dl className="min-w-0 flex-1 overflow-hidden pr-[11px] pl-4">
                  {reference.map(([text, code]) => (
                    <div key={text} className="flex h-[27px] items-center justify-between text-[13px] text-[#505050]">
                      <dt>{text}</dt>
                      <dd className={`text-[12px] text-[#3d7450] ${mono}`}>{code}</dd>
                    </div>
                  ))}
                </dl>
                <MiniScroll thumb="flex-[80]" rest="flex-[132]" />
              </div>
            </div>
          </Card>
        </aside>
      </div>
    </div>
  );
}

/* ---------- Desktop ---------- */

export default function App() {
  return (
    <div className="flex h-screen w-full overflow-hidden bg-black">
      <div className="flex w-1/2 flex-col">
        <Browser
          large
          canGoBack
          tabTitle="Verder oefenen met operators"
          favicon={<PageIcon className="h-5 w-4 shrink-0" />}
          urlText="#course"
          url={
            <>
              hiddebraun-ma.<span className="text-white">github.io</span>/SD-F1M1-Python-Extra/04-text-manipulation/02-regex-operators/
            </>
          }
        >
          <CoursePage />
        </Browser>
        <footer className="flex h-[60px] shrink-0 items-center bg-linear-to-r from-[#1f1f22] via-[#1e2129] via-50% to-[#1e1e1e] to-85% font-['Open_Sans',sans-serif] text-white">
          <TaskApps large />
          <div className="ml-auto flex items-center">
            <svg viewBox="0 0 18 12" className="h-3 w-[18px]" fill="none" stroke="#fff" strokeWidth="1.600" aria-hidden="true">
              <path d="m1 11 8-8 8 8" />
            </svg>
            <svg viewBox="0 0 22 24" className="ml-[18px] h-6 w-[22px]" aria-hidden="true">
              <rect x="1" y="1" width="20" height="19" fill="none" stroke="#fff" strokeWidth="1.600" />
              <circle cx="11" cy="10.500" r="4.500" fill="none" stroke="#fff" strokeWidth="3" />
              <path d="M11 3v15M3.500 10.500h3M15.500 10.500h3M6 5.500l2 2M16 5.500l-2 2M6 15.500l2-2M16 15.500l-2-2" stroke="#fff" strokeWidth="2.400" />
              <circle cx="11" cy="10.500" r="3" fill="#1e1e1e" />
              <path d="M7 22h8l-2-2H9z" fill="#fff" />
            </svg>
            <svg viewBox="0 0 26 20" className="ml-[12px] h-5 w-[26px]" fill="none" stroke="#fff" strokeWidth="1.400" aria-hidden="true">
              <path d="M2 1v4M6 1v4M1 5h6v4a2 2 0 0 1-2 2H3a2 2 0 0 1-2-2zM4 11v7h4" />
              <path d="M9 5h14v13H8" />
              <rect x="9" y="7" width="12" height="9" fill="#fff" stroke="none" />
              <path d="M25 9v5" />
            </svg>
            <svg viewBox="0 0 22 22" className="ml-[15px] h-[21px] w-[20px]" fill="none" stroke="#fff" strokeWidth="1.500" aria-hidden="true">
              <path d="M1 21C1 10 9 2 20 2" stroke="#777" />
              <path d="M6 21C6 13 12 7 20 7M11 21c0-5 4-9 9-9M15 21c0-2 2-5 5-5" />
              <circle cx="19" cy="20" r="1.800" fill="#fff" stroke="none" />
            </svg>
            <svg viewBox="0 0 24 22" className="ml-[13px] h-[21px] w-[23px]" fill="none" stroke="#fff" strokeWidth="1.500" aria-hidden="true">
              <path d="M1 7h4l6-5v18l-6-5H1z" />
              <path d="M13 8c1.500 2 1.500 4 0 6" />
              <path d="M16 5c3 3.500 3 8.500 0 12M19.500 2c4.500 5 4.500 13 0 18" stroke="#888" />
            </svg>
            <div className="ml-[10px] w-[98px] text-center text-[18px] leading-7">
              <div>09:55</div>
              <div>22-10-2020</div>
            </div>
            <button aria-label="Notifications" className="ml-[22px]">
              <svg viewBox="0 0 26 26" className="size-[25px]" fill="none" stroke="#fff" strokeWidth="1.500" aria-hidden="true">
                <path d="M1 1h24v19h-8l-4 5-4-5H1z" />
              </svg>
            </button>
            <div className="mr-[6px] ml-[29px] h-[60px] w-[2px] bg-[#7c7c7c]" />
          </div>
        </footer>
      </div>
      <div className="flex w-1/2 flex-col">
        <Browser
          tabTitle="Online regex tester and debugger"
          favicon={
            <span className="flex size-4 shrink-0 items-center justify-center bg-[#467abb] text-[11px] leading-none text-white">R</span>
          }
          urlText="#regex101"
          url={<span className="text-white">regex101.com</span>}
        >
          <RegexPage />
        </Browser>
        <footer className="flex h-10 shrink-0 items-center bg-linear-to-r from-[#201f1e] via-[#272120] via-20% to-[#1f1f1f] to-60% font-['Open_Sans',sans-serif] text-white">
          <TaskApps />
          <div className="ml-auto w-16 text-center text-[11px] leading-[18px]">
            <div>09:55</div>
            <div>22-10-2020</div>
          </div>
        </footer>
      </div>
    </div>
  );
}
